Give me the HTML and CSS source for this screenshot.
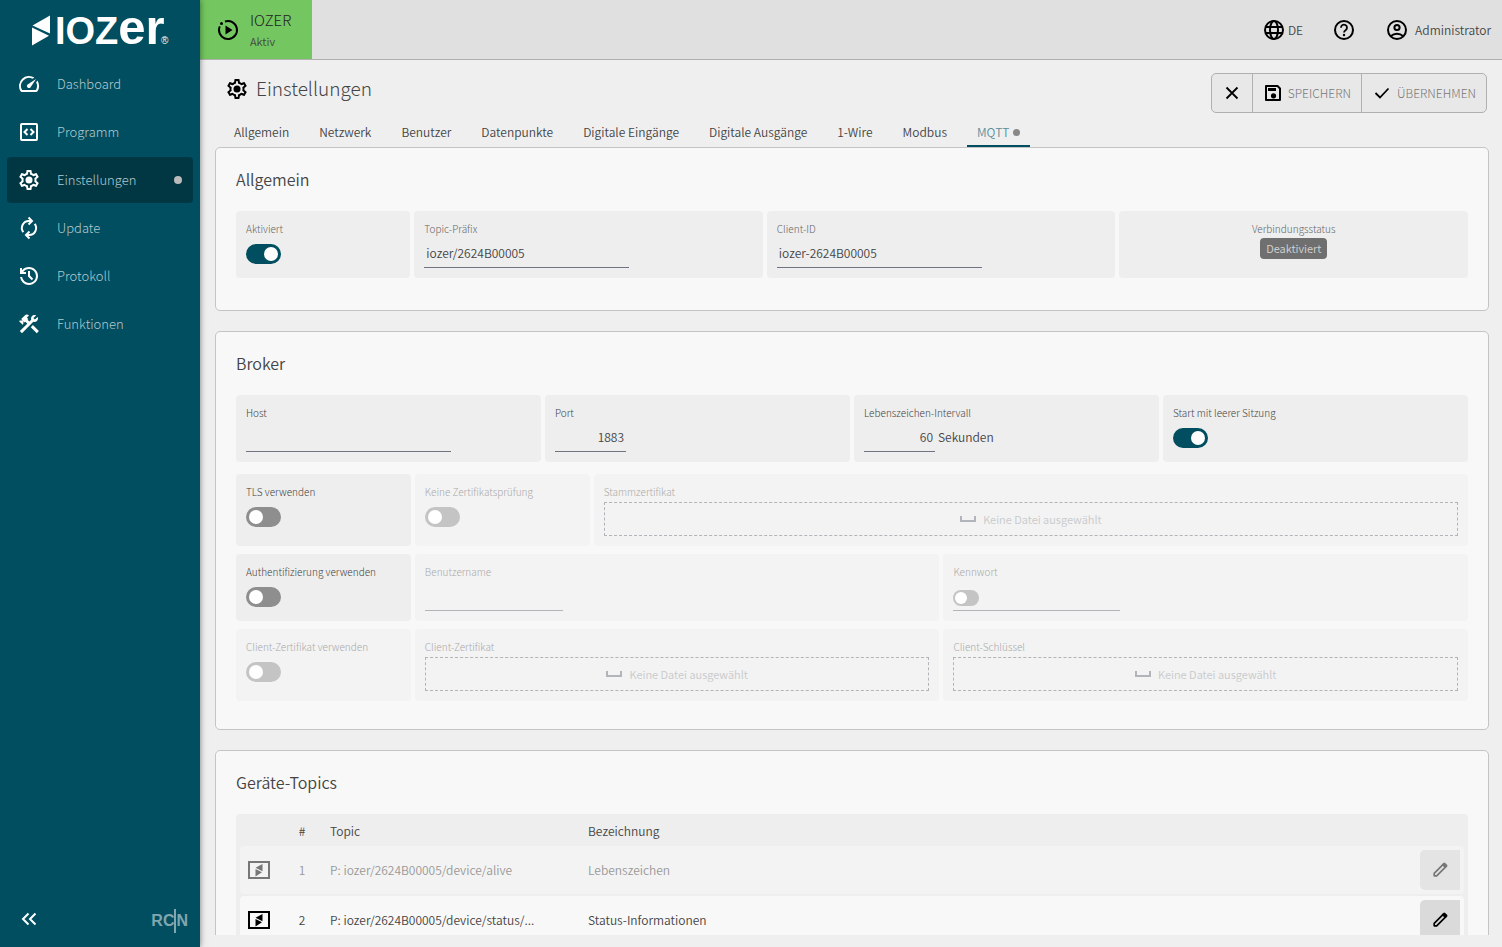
FILE: index.html
```html
<!DOCTYPE html>
<html lang="de">
<head>
<meta charset="utf-8">
<title>IOZER – Einstellungen</title>
<link rel="stylesheet" href="styles.css">
</head>
<body>
<svg class="sprite" aria-hidden="true">
  <symbol id="i-gear" viewBox="0 0 24 24"><path fill="currentColor" d="M19.43 12.98c.04-.32.07-.64.07-.98 0-.34-.03-.66-.07-.98l2.11-1.65c.19-.15.24-.42.12-.64l-2-3.46c-.09-.16-.26-.25-.44-.25-.06 0-.12.01-.17.03l-2.49 1c-.52-.4-1.08-.73-1.69-.98l-.38-2.65C14.46 2.18 14.25 2 14 2h-4c-.25 0-.46.18-.49.42l-.38 2.65c-.61.25-1.17.59-1.69.98l-2.49-1c-.06-.02-.12-.03-.18-.03-.17 0-.34.09-.43.25l-2 3.46c-.13.22-.07.49.12.64l2.11 1.65c-.04.32-.07.65-.07.98 0 .33.03.66.07.98l-2.11 1.65c-.19.15-.24.42-.12.64l2 3.46c.09.16.26.25.44.25.06 0 .12-.01.17-.03l2.49-1c.52.4 1.08.73 1.69.98l.38 2.65c.03.24.24.42.49.42h4c.25 0 .46-.18.49-.42l.38-2.65c.61-.25 1.17-.59 1.69-.98l2.49 1c.06.02.12.03.18.03.17 0 .34-.09.43-.25l2-3.46c.12-.22.07-.49-.12-.64l-2.11-1.65zm-1.98-1.71c.04.31.05.52.05.73 0 .21-.02.43-.05.73l-.14 1.13.89.7 1.08.84-.7 1.21-1.27-.51-1.04-.42-.9.68c-.43.32-.84.56-1.25.73l-1.06.43-.16 1.13-.2 1.35h-1.4l-.19-1.35-.16-1.13-1.06-.43c-.43-.18-.83-.41-1.23-.71l-.91-.7-1.06.43-1.27.51-.7-1.21 1.08-.84.89-.7-.14-1.13c-.03-.31-.05-.54-.05-.74s.02-.43.05-.73l.14-1.13-.89-.7-1.08-.84.7-1.21 1.27.51 1.04.42.9-.68c.43-.32.84-.56 1.25-.73l1.06-.43.16-1.13.2-1.35h1.39l.19 1.35.16 1.13 1.06.43c.43.18.83.41 1.23.71l.91.7 1.06-.43 1.27-.51.7 1.21-1.07.85-.89.7.14 1.13z"/><circle cx="12" cy="12" r="3.5" fill="currentColor"/></symbol>
  <symbol id="i-tray" viewBox="0 0 16 6"><path d="M1 0v5h14V0" fill="none" stroke="currentColor" stroke-width="2"/></symbol>
  <symbol id="i-pencil" viewBox="0 0 24 24"><path d="M5 19v-3L15.500 5.500l3 3L8 19z" fill="none" stroke="currentColor" stroke-width="2" stroke-linejoin="round"/><path d="M14 5.500l2-2q1-1 2.200 0l2.300 2.300q1 1.200 0 2.200l-2 2z" fill="currentColor"/></symbol>
  <symbol id="i-device" viewBox="0 0 22 20"><rect x="1" y="2" width="20" height="16" fill="none" stroke="currentColor" stroke-width="2"/><path d="M7.500 7.800L14.500 4v7.300zM7.500 9l6.500 3.200-6.500 4.300z" fill="currentColor"/></symbol>
</svg>
<div class="app">
  <aside class="sidebar">
    <svg class="logo" viewBox="0 0 140 32" role="img" aria-label="IOZER">
      <path fill="#fff" d="M2.500 10.500L20 0.500v18zM2 12.500l17 8.300L2 30.500z"/>
      <text class="logo-word" x="25" y="29">IOZ<tspan class="logo-low">er</tspan></text>
      <text class="logo-reg" x="131" y="29">®</text>
    </svg>
    <nav class="nav">
      <a class="nav-item" href="#dashboard"><svg class="icon" viewBox="0 0 24 24"><path fill="currentColor" d="M20.380 8.570l-1.230 1.850a8 8 0 0 1-.22 7.580H5.070A8 8 0 0 1 15.580 6.850l1.850-1.230A10 10 0 0 0 3.350 19a2 2 0 0 0 1.720 1h13.850a2 2 0 0 0 1.740-1 10 10 0 0 0-.27-10.440zM10.590 15.410a2 2 0 0 0 2.830 0l5.660-8.490-8.490 5.660a2 2 0 0 0 0 2.830z"/></svg><span>Dashboard</span></a>
      <a class="nav-item" href="#programm"><svg class="icon" viewBox="0 0 24 24"><g fill="none" stroke="currentColor" stroke-width="2"><rect x="4" y="4" width="16" height="16" rx="1"/><path d="M10.500 9l-3 3 3 3M13.500 9l3 3-3 3"/></g></svg><span>Programm</span></a>
      <a class="nav-item is-active" href="#einstellungen"><svg class="icon"><use href="#i-gear"/></svg><span>Einstellungen</span><i class="dot"></i></a>
      <a class="nav-item" href="#update"><svg class="icon" viewBox="0 0 24 24"><g fill="none" stroke="currentColor" stroke-width="2"><path d="M6.300 16.200A7 7 0 0 1 12 5h2.500M17.700 7.800A7 7 0 0 1 12 19H9.500"/><path d="M11.500 1.500L15 5l-3.500 3.500M12.500 15.500L9 19l3.500 3.500"/></g></svg><span>Update</span></a>
      <a class="nav-item" href="#protokoll"><svg class="icon" viewBox="0 0 24 24"><path fill="currentColor" d="M12 21q-3.450 0-6.010-2.290T3.050 13H5.100q.35 2.600 2.310 4.300T12 19q2.930 0 4.960-2.040T19 12q0-2.930-2.040-4.960T12 5q-1.730 0-3.230.8T6.250 8H9v2H3V4h2v2.350q1.280-1.600 3.110-2.480T12 3q1.880 0 3.510.71t2.850 1.930q1.220 1.210 1.930 2.850T21 12q0 1.880-.71 3.510t-1.930 2.850q-1.210 1.220-2.850 1.930T12 21zm2.800-4.800L11 12.400V7h2v4.600l3.200 3.200-1.400 1.400z"/></svg><span>Protokoll</span></a>
      <a class="nav-item" href="#funktionen"><svg class="icon" viewBox="0 0 24 24"><path fill="currentColor" d="M13.780 15.170l2.120-2.120 6 6-2.120 2.120zM17.500 10c1.930 0 3.500-1.570 3.500-3.500 0-.58-.16-1.120-.41-1.600l-2.700 2.700-1.490-1.490 2.700-2.700c-.48-.25-1.020-.41-1.600-.41C15.570 3 14 4.570 14 6.500c0 .41.08.8.21 1.160l-1.850 1.850-1.780-1.780.71-.71-1.410-1.410L12 3.490c-1.170-1.170-3.070-1.170-4.240 0L4.220 7.030l1.410 1.410H2.810l-.71.71 3.540 3.540.71-.71V9.150l1.410 1.410.71-.71 1.780 1.780-7.410 7.410 2.120 2.120L16.340 9.790c.36.13.75.21 1.160.21z"/></svg><span>Funktionen</span></a>
    </nav>
    <div class="sidebar-foot">
      <button class="collapse" type="button" aria-label="Menü einklappen"><svg class="icon" viewBox="0 0 24 24"><path d="M11.500 6.500L6 12l5.500 5.500M18.500 6.500L13 12l5.500 5.500" fill="none" stroke="currentColor" stroke-width="2"/></svg></button>
      <span class="rcn"><span>RC</span><i></i><span>N</span></span>
    </div>
  </aside>

  <div class="page">
    <header class="topbar">
      <div class="status">
        <svg class="icon" viewBox="0 0 24 24"><path d="M9 3.500A9 9 0 1 1 3 12q0-2 .8-3.600" fill="none" stroke="currentColor" stroke-width="2"/><circle cx="5.500" cy="5.500" r="1.500" fill="currentColor"/><path d="M9.500 7.500v9l7-4.500z" fill="currentColor"/></svg>
        <div class="status-text"><span class="status-name">IOZER</span><span class="status-state">Aktiv</span></div>
      </div>
      <div class="top-actions">
        <button class="top-btn" type="button"><svg class="icon" viewBox="0 0 24 24"><g fill="none" stroke="currentColor" stroke-width="2"><circle cx="12" cy="12" r="9"/><ellipse cx="12" cy="12" rx="4" ry="9"/><path d="M3.500 9h17M3.500 15h17"/></g></svg>DE</button>
        <button class="top-btn" type="button" aria-label="Hilfe"><svg class="icon" viewBox="0 0 24 24"><circle cx="12" cy="12" r="9" fill="none" stroke="currentColor" stroke-width="2"/><path d="M9 9.700a3 3 0 1 1 4.600 2.500q-1.600 1.100-1.600 2.300" fill="none" stroke="currentColor" stroke-width="1.800"/><circle cx="12" cy="17" r="1.200" fill="currentColor"/></svg></button>
        <button class="top-btn top-user" type="button"><svg class="icon" viewBox="0 0 24 24"><g fill="none" stroke="currentColor" stroke-width="2"><circle cx="12" cy="12" r="9"/><circle cx="12" cy="9.500" r="2.600"/><path d="M5.700 18.200q2.800-2.400 6.300-2.400t6.300 2.400"/></g></svg>Administrator</button>
      </div>
    </header>

    <main class="content">
      <div class="title-row">
        <h1 class="title"><svg class="icon"><use href="#i-gear"/></svg><span>Einstellungen</span></h1>
        <div class="btn-group">
          <button type="button" aria-label="Verwerfen"><svg class="icon" viewBox="0 0 24 24"><path d="M6.500 6.500l11 11M17.500 6.500l-11 11" fill="none" stroke="currentColor" stroke-width="1.800"/></svg></button>
          <button type="button"><svg class="icon" viewBox="0 0 24 24"><path d="M5 5h11.500L19 7.500V19H5z" fill="none" stroke="currentColor" stroke-width="2" stroke-linejoin="round"/><path d="M7 7h8v3H7z" fill="currentColor"/><circle cx="12.500" cy="14.800" r="2.600" fill="currentColor"/></svg>SPEICHERN</button>
          <button type="button"><svg class="icon" viewBox="0 0 24 24"><path d="M5.500 12l4.500 4.500L18.500 7.500" fill="none" stroke="currentColor" stroke-width="1.800"/></svg>ÜBERNEHMEN</button>
        </div>
      </div>
      <nav class="tabs">
        <a href="#allgemein">Allgemein</a><a href="#netzwerk">Netzwerk</a><a href="#benutzer">Benutzer</a><a href="#datenpunkte">Datenpunkte</a><a href="#eingaenge">Digitale Eingänge</a><a href="#ausgaenge">Digitale Ausgänge</a><a href="#wire">1-Wire</a><a href="#modbus">Modbus</a><a class="is-active" href="#mqtt">MQTT<i class="dot"></i></a>
      </nav>

      <div class="scroll">
        <section class="card">
          <h2>Allgemein</h2>
          <div class="row row-general">
            <div class="tile"><label for="aktiviert">Aktiviert</label><input class="switch" type="checkbox" id="aktiviert" checked></div>
            <div class="tile"><label for="praefix">Topic-Präfix</label><input class="field" type="text" id="praefix" value="iozer/2624B00005"></div>
            <div class="tile"><label for="clientid">Client-ID</label><input class="field" type="text" id="clientid" value="iozer-2624B00005"></div>
            <div class="tile tile-center"><span class="tile-label">Verbindungsstatus</span><span class="badge">Deaktiviert</span></div>
          </div>
        </section>

        <section class="card card-broker">
          <h2>Broker</h2>
          <div class="row row-four">
            <div class="tile strong"><label for="host">Host</label><input class="field" type="text" id="host"></div>
            <div class="tile strong"><label for="port">Port</label><input class="field field-num" type="text" id="port" value="1883"></div>
            <div class="tile strong"><label for="intervall">Lebenszeichen-Intervall</label><div class="with-unit"><input class="field field-num" type="text" id="intervall" value="60"><span>Sekunden</span></div></div>
            <div class="tile strong"><label for="sitzung">Start mit leerer Sitzung</label><input class="switch" type="checkbox" id="sitzung" checked></div>
          </div>
          <div class="row row-tls">
            <div class="tile strong"><label for="tls">TLS verwenden</label><input class="switch" type="checkbox" id="tls"></div>
            <div class="tile off"><label for="nocheck">Keine Zertifikatsprüfung</label><input class="switch" type="checkbox" id="nocheck" disabled></div>
            <div class="tile off"><label for="stamm">Stammzertifikat</label><button class="upload" type="button" id="stamm" disabled><svg class="tray"><use href="#i-tray"/></svg>Keine Datei ausgewählt</button></div>
          </div>
          <div class="row row-auth">
            <div class="tile strong"><label for="auth">Authentifizierung verwenden</label><input class="switch" type="checkbox" id="auth"></div>
            <div class="tile off"><label for="user">Benutzername</label><input class="field field-user" type="text" id="user" disabled></div>
            <div class="tile off"><label for="pw">Kennwort</label><div class="password"><input class="switch switch-small" type="checkbox" aria-label="Kennwort ändern" disabled><input class="field" type="password" id="pw" disabled></div></div>
          </div>
          <div class="row row-auth">
            <div class="tile off"><label for="cert">Client-Zertifikat verwenden</label><input class="switch" type="checkbox" id="cert" disabled></div>
            <div class="tile off"><label for="certfile">Client-Zertifikat</label><button class="upload" type="button" id="certfile" disabled><svg class="tray"><use href="#i-tray"/></svg>Keine Datei ausgewählt</button></div>
            <div class="tile off"><label for="keyfile">Client-Schlüssel</label><button class="upload" type="button" id="keyfile" disabled><svg class="tray"><use href="#i-tray"/></svg>Keine Datei ausgewählt</button></div>
          </div>
        </section>

        <section class="card card-topics">
          <h2>Geräte-Topics</h2>
          <div class="table-box">
            <table class="topics">
              <colgroup><col class="c-icon"><col class="c-num"><col class="c-topic"><col><col class="c-edit"></colgroup>
              <thead><tr><th></th><th class="num">#</th><th>Topic</th><th>Bezeichnung</th><th></th></tr></thead>
              <tbody>
                <tr class="muted"><td><svg class="device"><use href="#i-device"/></svg></td><td class="num">1</td><td>P: iozer/2624B00005/device/alive</td><td>Lebenszeichen</td><td><button class="edit" type="button" aria-label="Bearbeiten"><svg class="pen"><use href="#i-pencil"/></svg></button></td></tr>
                <tr><td><svg class="device"><use href="#i-device"/></svg></td><td class="num">2</td><td>P: iozer/2624B00005/device/status/...</td><td>Status-Informationen</td><td><button class="edit" type="button" aria-label="Bearbeiten"><svg class="pen"><use href="#i-pencil"/></svg></button></td></tr>
              </tbody>
            </table>
          </div>
        </section>
      </div>
    </main>
  </div>
</div>
</body>
</html>
```
FILE: styles.css
```css
* { box-sizing: border-box; }
body {
  margin: 0;
  font-family: "Noto Sans CJK SC", "Noto Sans", sans-serif;
  font-weight: 350;
  font-size: 12px;
  line-height: 20px;
  color: #444;
  background: #efefef;
}
button, input { font: inherit; color: inherit; }
button { border: 0; background: none; padding: 0; }
a { color: inherit; text-decoration: none; }
.sprite { display: none; }
.icon { width: 24px; height: 24px; flex: none; }
.dot { width: 8px; height: 8px; border-radius: 50%; background: #bbb; }

.app { display: flex; height: 100vh; }

/* Sidebar */
.sidebar {
  width: 200px;
  flex: none;
  display: flex;
  flex-direction: column;
  background: #004e5f;
  box-shadow: 0 0 6px rgba(0, 0, 0, .5);
  z-index: 1;
}
.logo { width: 140px; height: 32px; margin: 15px 0 14px 30px; flex: none; overflow: visible; }
.logo text { fill: #fff; font-family: "Liberation Sans", Arial, sans-serif; }
.logo .logo-word { font-size: 38px; font-weight: 700; }
.logo .logo-low { font-size: 49px; }
.logo .logo-reg { font-size: 10px; font-weight: 400; }
.nav { display: flex; flex-direction: column; gap: 2px; padding: 0 7px; font-size: 13px; font-weight: 300; }
.nav-item {
  display: flex;
  align-items: center;
  height: 46px;
  padding: 0 11px 0 10px;
  border-radius: 4px;
  color: #fff;
}
.nav-item span { margin-left: 16px; color: #b3cad0; }
.nav-item .dot { margin-left: auto; }
.nav-item.is-active { background: #003743; }
.sidebar-foot {
  display: flex;
  align-items: center;
  justify-content: space-between;
  margin-top: auto;
  padding: 0 12px 12px 17px;
}
.collapse { height: 28px; color: #fff; }
.rcn {
  display: flex;
  align-items: center;
  color: #80a6af;
  font: 700 16px/24px "Liberation Sans", Arial, sans-serif;
}
.rcn i { width: 2px; height: 24px; background: #80a6af; }

/* Top bar */
.page { flex: 1; min-width: 0; display: flex; flex-direction: column; }
.topbar {
  display: flex;
  justify-content: space-between;
  height: 60px;
  flex: none;
  background: #e0e0e0;
  border-bottom: 1px solid #b0b0b0;
}
.status {
  display: flex;
  align-items: center;
  gap: 10px;
  width: 112px;
  padding-left: 16px;
  background: #74c660;
}
.status-text { display: flex; flex-direction: column; }
.status .icon { color: #000; }
.status-name { font-size: 15px; font-weight: 300; line-height: 22px; color: #222; }
.status-state { font-size: 11px; }
.top-actions { display: flex; align-items: center; gap: 29px; padding-right: 11px; }
.top-btn { display: flex; align-items: center; gap: 2px; }
.top-btn .icon { color: #000; }
.top-user { gap: 6px; }

/* Page head */
.content {
  flex: 1;
  min-height: 0;
  display: flex;
  flex-direction: column;
  padding: 13px 13px 12px 15px;
}
.title-row { display: flex; justify-content: space-between; padding-right: 2px; }
.title {
  display: flex;
  align-items: center;
  gap: 7px;
  height: 32px;
  margin: 0;
  padding-left: 10px;
  font-size: 19px;
  font-weight: 300;
  line-height: 28px;
  color: #444;
}
.title span { padding-bottom: 2px; }
.title .icon { color: #000; }
.btn-group {
  display: flex;
  height: 40px;
  border: 1px solid #b0b0b0;
  border-radius: 5px;
  background: #e8e8e8;
}
.btn-group button { display: flex; align-items: center; gap: 3px; padding: 0 10px 0 8px; color: #777; font-weight: 300; }
.btn-group button:first-child { padding: 0 8px; }
.btn-group button + button { border-left: 1px solid #b0b0b0; }
.btn-group .icon { color: #000; }
.tabs { display: flex; gap: 10px; padding-left: 9px; }
.tabs a {
  display: flex;
  align-items: center;
  gap: 4px;
  height: 34px;
  padding: 6px 10px 0;
  border-bottom: 2px solid transparent;
}
.tabs a.is-active { color: #5c8f9b; border-color: #004e5f; }
.tabs .dot { width: 7px; height: 7px; background: #888; }

/* Cards */
.scroll { flex: 1; min-height: 0; overflow: hidden; display: flex; flex-direction: column; gap: 20px; }
.card {
  flex: none;
  padding: 19px 20px 32px;
  border: 1px solid #c4c4c4;
  border-radius: 5px;
  background: #f8f8f8;
}
.card-broker { padding-bottom: 28px; }
.card h2 { margin: 0 0 20px; font-size: 16px; font-weight: 350; line-height: 24px; }
.row { display: grid; gap: 4px; }
.row + .row { margin-top: 8px; }
.row-four + .row { margin-top: 12px; }
.row-general { grid-template-columns: 1fr 2fr 2fr 2fr; }
.row-four { grid-template-columns: repeat(4, 1fr); }
.row-tls { grid-template-columns: 1fr 1fr 5fr; }
.row-auth { grid-template-columns: 1fr 3fr 3fr; }
.tile {
  display: flex;
  flex-direction: column;
  align-items: flex-start;
  gap: 2px;
  min-width: 0;
  padding: 10px;
  border-radius: 4px;
  background: #eee;
}
.tile label, .tile-label { font-size: 10px; font-weight: 300; line-height: 16px; color: #666; white-space: nowrap; }
.tile.strong label { color: #444; }
.tile.off { background: #f3f3f3; }
.tile.off label { color: #aaa; }
.tile.tile-center { align-items: center; gap: 1px; }
.badge {
  padding: 0 6px 1px;
  border-radius: 4px;
  background: #6f6f6f;
  color: #d4d4d4;
  font-size: 11px;
  line-height: 20px;
}
.field {
  width: 205px;
  height: 29px;
  padding: 0 2px 2px;
  border: 0;
  border-bottom: 1px solid #6f7480;
  border-radius: 0;
  background: none;
}
.field-num { width: 71px; text-align: right; }
.field-user { width: 138px; }
.field:disabled { border-color: #b1b4b8; }
.with-unit { display: flex; align-items: center; gap: 3px; }
.with-unit span { padding-bottom: 2px; }
.switch {
  appearance: none;
  width: 35px;
  height: 20px;
  margin: 5px 0 0;
  padding: 3px;
  border-radius: 10px;
  background: #8e8e8e;
}
.switch::before { content: ""; display: block; width: 14px; height: 14px; border-radius: 50%; background: #fff; }
.switch:checked { background: #004e5f; }
.switch:checked::before { margin-left: auto; }
.switch:disabled { background: #c4c4c4; }
.switch-small { width: 26px; height: 16px; margin: 3px 0 0; padding: 2px; }
.switch-small::before { width: 12px; height: 12px; }
.password { display: flex; align-items: center; width: 167px; height: 29px; border-bottom: 1px solid #b1b4b8; }
.password .field { flex: 1; min-width: 0; height: 28px; border: 0; }
.upload {
  display: flex;
  align-items: center;
  justify-content: center;
  gap: 7px;
  width: 100%;
  height: 34px;
  border: 1px dashed #b1b4b8;
  color: #c8cacc;
  font-size: 11px;
}
.tray { width: 16px; height: 6px; color: #b1b4b8; }

/* Topics table */
.table-box { padding: 0 4px; border-radius: 4px; background: #eee; }
.topics { width: 100%; table-layout: fixed; border-collapse: separate; border-spacing: 0 2px; }
.c-icon { width: 48px; }
.c-num { width: 28px; }
.c-topic { width: 258px; }
.c-edit { width: 48px; }
.topics th { height: 28px; padding: 2px 14px 0; font-weight: 350; text-align: left; }
.topics td { height: 48px; padding: 0 14px; background: #f8f8f8; white-space: nowrap; }
.topics .num { padding-left: 0; padding-right: 0; text-align: center; }
.topics td:first-child { padding: 0 8px; border-radius: 4px 0 0 4px; }
.topics td:last-child { padding: 4px; border-radius: 0 4px 4px 0; }
.topics .muted td { background: #f3f3f3; color: #999; }
.device { display: block; width: 22px; height: 20px; color: #000; }
.edit { display: grid; place-items: center; width: 40px; height: 40px; border-radius: 5px 0 0 5px; background: #dadada; color: #000; }
.pen { width: 20px; height: 20px; }
.muted .device { color: #777; }
.muted .edit { background: #e4e4e4; color: #777; }
```
